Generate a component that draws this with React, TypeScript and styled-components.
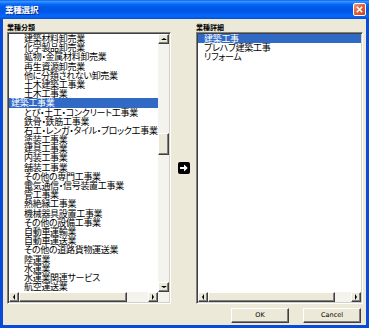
import styled, { createGlobalStyle, css } from 'styled-components';

const categories = [
    '建築材料卸売業',
    '化学製品卸売業',
    '鉱物・金属材料卸売業',
    '再生資源卸売業',
    '他に分類されない卸売業',
    '土木建築工事業',
    '土木工事業',
    '建築工事業',
    'とび・土工・コンクリート工事業',
    '鉄骨・鉄筋工事業',
    '石工・レンガ・タイル・ブロック工事業',
    '塗装工事業',
    '建具工事業',
    '内装工事業',
    '舗装工事業',
    'その他の専門工事業',
    '電気通信・信号装置工事業',
    '管工事業',
    '熱絶縁工事業',
    '機械器具設置工事業',
    'その他の設備工事業',
    '自動車運輸業',
    '自動車運送業',
    'その他の道路貨物運送業',
    '陸運業',
    '水運業',
    '水運業関連サービス',
    '航空運送業',
];

const details = ['建築工事', 'プレハブ建築工事', 'リフォーム'];

type Dir = 'up' | 'down' | 'left' | 'right';

const GlobalStyle = createGlobalStyle`
    html, body {
        margin: 0;
        padding: 0;
        background: #ece9d8;
    }
    body {
        font-family: "Noto Sans CJK JP", "Noto Sans", sans-serif;
    }
`;

const Arrow = ({ dir }: { dir: Dir }) => <Tri $dir={dir} />;

const VScroll = ({ thumbTop, thumbSize }: { thumbTop: number; thumbSize: number }) => (
    <VBar>
        <ScrollButton>
            <Arrow dir="up" />
        </ScrollButton>
        <Track style={{ height: thumbTop }} />
        <Thumb style={{ height: thumbSize }} />
        <Track $grow />
        <ScrollButton>
            <Arrow dir="down" />
        </ScrollButton>
    </VBar>
);

const HScroll = ({ thumbSize }: { thumbSize: number }) => (
    <HBar>
        <ScrollButton>
            <Arrow dir="left" />
        </ScrollButton>
        <Thumb style={{ width: thumbSize }} />
        <Track $grow />
        <ScrollButton>
            <Arrow dir="right" />
        </ScrollButton>
    </HBar>
);

export default function App() {
    return (
        <Window>
            <GlobalStyle />
            <TitleBar>
                <Title>業種選択</Title>
                <CloseButton>
                    <svg width="7" height="7" viewBox="0 0 7 7">
                        <path d="M0.8 0.8 L6.2 6.2 M6.2 0.8 L0.8 6.2" stroke="#fff" strokeWidth="1.6" />
                    </svg>
                </CloseButton>
            </TitleBar>
            <Body>
                <Columns>
                    <Label>業種分類</Label>
                    <span />
                    <Label>業種詳細</Label>

                    <ListBox>
                        <LeftGrid>
                            <Items>
                                {categories.map((name) => (
                                    <Item key={name} $selected={name === '建築工事業'} $indent={15}>
                                        {name}
                                    </Item>
                                ))}
                            </Items>
                            <VScroll thumbTop={89} thumbSize={22} />
                            <HScroll thumbSize={108} />
                            <Corner />
                        </LeftGrid>
                    </ListBox>

                    <Middle>
                        <svg width="12" height="12" viewBox="0 0 12 12">
                            <rect x="0" y="0" width="12" height="12" rx="2" fill="#000" />
                            <path d="M2 5 H6 V2.5 L9.8 6 L6 9.5 V7 H2 Z" fill="#fff" />
                        </svg>
                    </Middle>

                    <ListBox>
                        <RightGrid>
                            <Items>
                                {details.map((name, index) => (
                                    <Item key={name} $selected={index === 0} $indent={6}>
                                        {name}
                                    </Item>
                                ))}
                            </Items>
                            <HScroll thumbSize={127} />
                        </RightGrid>
                    </ListBox>
                </Columns>
                <Footer>
                    <PushButton>OK</PushButton>
                    <PushButton>Cancel</PushButton>
                </Footer>
            </Body>
        </Window>
    );
}

const Window = styled.div`
    width: 369px;
    height: 328px;
    display: flex;
    flex-direction: column;
    background: #0a4ad8;
    overflow: hidden;
`;

const TitleBar = styled.div`
    height: 19px;
    flex: none;
    display: flex;
    align-items: center;
    justify-content: space-between;
    padding: 0 3px 0 5px;
    background: linear-gradient(
        to bottom,
        #0a5fe8 0%,
        #3b93ff 8%,
        #2080ff 14%,
        #0366f5 24%,
        #0058e6 40%,
        #0057e8 60%,
        #0560f2 75%,
        #0a68f8 85%,
        #0050d8 100%
    );
`;

const Title = styled.span`
    color: #fff;
    font-size: 8.5px;
    font-weight: bold;
    line-height: 19px;
    text-shadow: 1px 1px 0 #0a2a88;
    letter-spacing: -0.2px;
`;

const CloseButton = styled.div`
    width: 13px;
    height: 13px;
    box-sizing: border-box;
    border: 1px solid #fff;
    border-radius: 2px;
    background: linear-gradient(135deg, #f09a80 0%, #e0623f 45%, #c9431f 100%);
    display: flex;
    align-items: center;
    justify-content: center;
`;

const Body = styled.div`
    flex: 1;
    margin: 0 3px 3px 3px;
    padding: 4px 3px 2px 4px;
    background: #ece9d8;
    display: flex;
    flex-direction: column;
`;

const Columns = styled.div`
    display: grid;
    grid-template-columns: 164px 1fr 167px;
    grid-template-rows: 9px 272px;
`;

const Label = styled.div`
    font-size: 7px;
    font-weight: bold;
    line-height: 9px;
    color: #000;
`;

const ListBox = styled.div`
    box-sizing: border-box;
    height: 272px;
    background: #fff;
    border-style: solid;
    border-width: 1px;
    border-color: #808080 #fff #fff #808080;
    box-shadow: inset 1px 1px 0 #404040, inset -1px -1px 0 #d4d0c8;
    padding: 1px;
    overflow: hidden;
`;

const LeftGrid = styled.div`
    height: 100%;
    display: grid;
    grid-template-columns: 1fr 11px;
    grid-template-rows: 1fr 10px;
`;

const RightGrid = styled.div`
    height: 100%;
    display: grid;
    grid-template-columns: 1fr;
    grid-template-rows: 1fr 10px;
`;

const Items = styled.div`
    overflow: hidden;
`;

const Item = styled.div<{ $selected?: boolean; $indent: number }>`
    height: 9.2px;
    line-height: 9.2px;
    font-size: 9px;
    letter-spacing: -0.3px;
    white-space: nowrap;
    font-feature-settings: 'palt';
    padding-left: ${({ $indent }) => $indent}px;
    color: #000;
    ${({ $selected, $indent }) =>
        $selected &&
        css`
            background: #316ac5;
            color: #fff;
            padding-left: ${$indent === 15 ? 2 : $indent}px;
        `}
`;

const VBar = styled.div`
    display: flex;
    flex-direction: column;
    background: #f4f3ee;
    & > * {
        width: 11px;
    }
    & > div:first-child,
    & > div:last-child {
        height: 10px;
    }
`;

const HBar = styled.div`
    display: flex;
    background: #f4f3ee;
    & > div:first-child,
    & > div:last-child {
        width: 10px;
    }
`;

const Corner = styled.div`
    background: #f4f3ee;
`;

const bevel = css`
    box-sizing: border-box;
    background: #ece9d8;
    border-style: solid;
    border-width: 1px;
    border-color: #fff #404040 #404040 #fff;
    box-shadow: inset -1px -1px 0 #808080;
`;

const ScrollButton = styled.div`
    ${bevel};
    flex: none;
    display: flex;
    align-items: center;
    justify-content: center;
`;

const Thumb = styled.div`
    ${bevel};
    flex: none;
`;

const Track = styled.div<{ $grow?: boolean }>`
    flex: ${({ $grow }) => ($grow ? 1 : 'none')};
    background: #f4f3ee;
`;

const Tri = styled.span<{ $dir: Dir }>`
    width: 0;
    height: 0;
    border: 3px solid transparent;
    ${({ $dir }) => {
        switch ($dir) {
            case 'up':
                return css`
                    border-bottom: 2px solid #000;
                    border-top-width: 0;
                `;
            case 'down':
                return css`
                    border-top: 2px solid #000;
                    border-bottom-width: 0;
                `;
            case 'left':
                return css`
                    border-right: 2px solid #000;
                    border-left-width: 0;
                `;
            default:
                return css`
                    border-left: 2px solid #000;
                    border-right-width: 0;
                `;
        }
    }}
`;

const Middle = styled.div`
    display: flex;
    align-items: center;
    justify-content: center;
    padding-left: 1px;
`;

const Footer = styled.div`
    margin-top: 4px;
    display: flex;
    justify-content: flex-end;
    gap: 14px;
    padding-right: 2px;
`;

const PushButton = styled.button`
    ${bevel};
    width: 58px;
    height: 15px;
    padding: 0;
    font-family: "DejaVu Sans", "Liberation Sans", sans-serif;
    font-size: 6.5px;
    line-height: 13px;
    color: #000;
`;
